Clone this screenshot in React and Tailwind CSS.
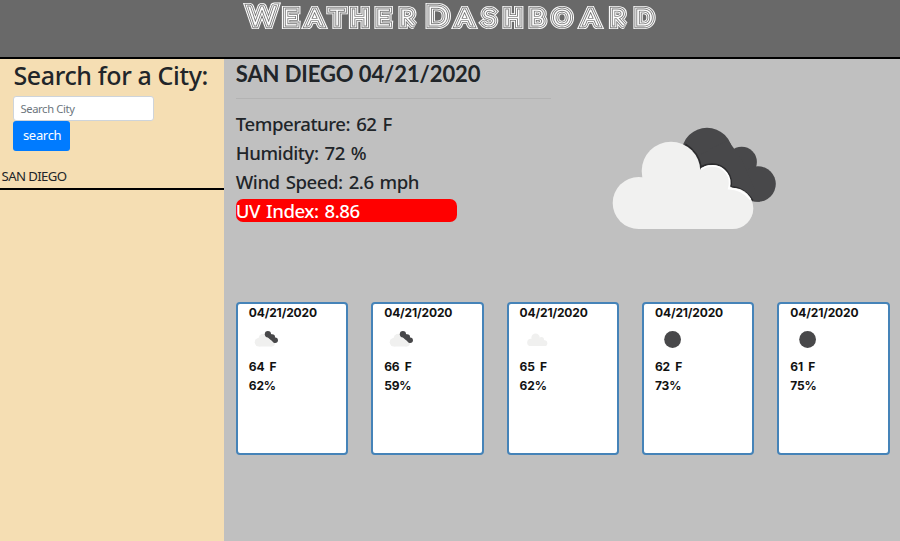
const TITLE = "WEATHER DASHBOARD";
// Centre of each glyph along the banner; the space keeps its own slot.
const TITLE_CENTERS = [262, 290.5, 314.5, 337, 359.5, 383, 407, 421, 437.5, 464.5, 489, 513, 537.5, 562, 590.5, 617.5, 644];
const STRETCH = 1.1;
const TITLE_X = TITLE_CENTERS.map((x) => (x / STRETCH).toFixed(2)).join(" ");

// Concentric outlines give the lettering its neon-tube look.
const RINGS = [
  ["#ffffff", 8.2],
  ["#777777", 6.3],
  ["#ffffff", 4.7],
  ["#777777", 2.8],
  ["#ffffff", 1.2],
];

function Title() {
  return (
    <svg width="900" height="36" viewBox="0 0 900 36" role="img" aria-label="Weather Dashboard" className="opacity-[0.99] will-change-transform">
      <g transform={`scale(${STRETCH} 1)`}>
        {RINGS.map(([color, width]) => (
          <text
            key={width}
            x={TITLE_X}
            y="25.2"
            textAnchor="middle"
            fontFamily="Lato, sans-serif"
            fontWeight="100"
            fontSize="21"
            fill={color}
            stroke={color}
            strokeWidth={width}
            strokeLinejoin="miter"
            strokeMiterlimit="2"
          >
            <tspan fontSize="25">{TITLE[0]}</tspan>
            {TITLE.slice(1, 8)}
            <tspan fontSize="26">{TITLE[8]}</tspan>
            {TITLE.slice(9)}
          </text>
        ))}
      </g>
    </svg>
  );
}

function LightCloud() {
  return (
    <g>
      <circle cx="38.7" cy="88" r="26" />
      <circle cx="71" cy="56" r="29.3" />
      <circle cx="112" cy="68" r="18" />
      <circle cx="132.6" cy="93.4" r="20.7" />
      <path d="M38.7 114.1H132.6V73L112 60L71 56L41 63Z" />
    </g>
  );
}

function BrokenClouds() {
  return (
    <svg width="190" height="125" viewBox="0 0 190 125">
      <g fill="#48484a">
        <circle cx="107" cy="38" r="25.3" />
        <circle cx="141.7" cy="47" r="15.2" />
        <circle cx="158" cy="69" r="17.8" />
        <path d="M90 45L128 25L142 45L160 86.8L148 86L110 65Z" />
      </g>
      <path d="M85 30Q98 38 100.5 53Q106 50 112 50A18 18 0 0 1 129.6 72.8Q143 72.5 152 86" fill="none" stroke="#2b2b2d" strokeWidth="3.4" />
      <g fill="#f1f1f0">
        <LightCloud />
      </g>
      <path d="M101 54Q106 50.8 112 50.8A17.2 17.2 0 0 1 128.8 73.5Q142 73.5 150.5 84.5" fill="none" stroke="#fff" strokeWidth="1.8" />
    </svg>
  );
}

function SmallIcon({ kind }) {
  return (
    <svg width="40" height="20" viewBox="0 0 40 20" className="block">
      {kind === "broken" && (
        <>
          <g fill="#f0f0ef">
            <circle cx="9.9" cy="13.3" r="4.2" />
            <circle cx="14.5" cy="9.7" r="5" />
            <circle cx="22.6" cy="14" r="3.4" />
            <path d="M9.9 17.5H22.6V10L14 9Z" />
          </g>
          <g fill="#48484a">
            <circle cx="18.9" cy="5.2" r="3.1" />
            <circle cx="23.2" cy="8" r="2.8" />
            <circle cx="26.2" cy="11.2" r="2.7" />
            <path d="M17 7L21 4L28 10.5L25.5 14Z" />
          </g>
        </>
      )}
      {kind === "cloud" && (
        <g fill="#f0f0ef" transform="translate(5.4 .8) scale(.143)">
          <LightCloud />
        </g>
      )}
      {kind === "moon" && <circle cx="17.6" cy="10.5" r="8.4" fill="#48484a" />}
    </svg>
  );
}

const DAYS = [
  ["broken", "64 F", "62%"],
  ["broken", "66 F", "59%"],
  ["cloud", "65 F", "62%"],
  ["moon", "62 F", "73%"],
  ["moon", "61 F", "75%"],
];

export default function App() {
  return (
    <div className="flex h-[541px] w-[900px] flex-col overflow-hidden bg-[#c0c0c0] font-['Noto_Sans',sans-serif] text-[#212529]">
      <header className="h-[59px] shrink-0 border-b-2 border-black bg-[#696969]">
        <Title />
      </header>
      <div className="flex flex-1">
        <aside className="w-[224px] shrink-0 bg-[#f5deb3]">
          <div className="pl-[13.4px]">
            <h2 className="h-[36.5px] whitespace-nowrap text-[25px] leading-[33px] font-medium tracking-[-0.37px]">Search for a City:</h2>
            <input
              className="block h-[25px] w-[140.5px] rounded-[3px] border border-[#ced4da] bg-white px-[6px] text-[11.2px] tracking-[-0.35px] placeholder:text-[#6c757d]"
              placeholder="Search City"
            />
            <button className="block h-[30px] w-[56.5px] rounded-[3px] bg-[#007bff] pt-px pl-px text-[13px] tracking-[-0.3px] text-white">search</button>
          </div>
          <div className="mt-[15.5px] h-[24px] border-b-2 border-black pl-[1.5px] text-[13.2px] leading-[21px] tracking-[-0.6px]">SAN DIEGO</div>
        </aside>
        <main className="flex flex-1 flex-col pl-[11.8px]">
          <div className="flex h-[243px]">
            <section className="w-[315px]">
              <h3 className="mb-[9px] h-[30px] whitespace-nowrap font-[Lato,sans-serif] text-[22px] leading-[29px] font-bold tracking-[-0.1px]">SAN DIEGO 04/21/2020</h3>
              <hr className="mb-[15px] border-t border-[#b3b3b3]" />
              <div className="-mt-[2px] flex flex-col gap-[6px] text-[18.6px] leading-[23px] font-medium tracking-[-0.45px] [word-spacing:1.6px]">
                <p>Temperature: 62 F</p>
                <p>Humidity: 72 %</p>
                <p>Wind Speed: 2.6 mph</p>
                <p className="w-[221px] rounded-[7px] bg-[#ff0000] text-white">UV Index: 8.86</p>
              </div>
            </section>
            <div className="pt-[56px] pl-[49.2px]">
              <BrokenClouds />
            </div>
          </div>
          <div className="flex gap-[23px]">
            {DAYS.map(([kind, temp, humidity], i) => (
              <article
                key={i}
                className="h-[153px] w-[112.4px] shrink-0 rounded-[4px] border-2 border-[#4583b8] bg-white pl-[11px] font-[Inter,sans-serif] text-[12px] leading-[19px] font-bold tracking-[-0.15px] text-[#111] [word-spacing:2.5px]"
              >
                <p className="-mt-px">04/21/2020</p>
                <div className="h-[35px] pt-[7px]">
                  <SmallIcon kind={kind} />
                </div>
                <p>{temp}</p>
                <p>{humidity}</p>
              </article>
            ))}
          </div>
        </main>
      </div>
    </div>
  );
}
